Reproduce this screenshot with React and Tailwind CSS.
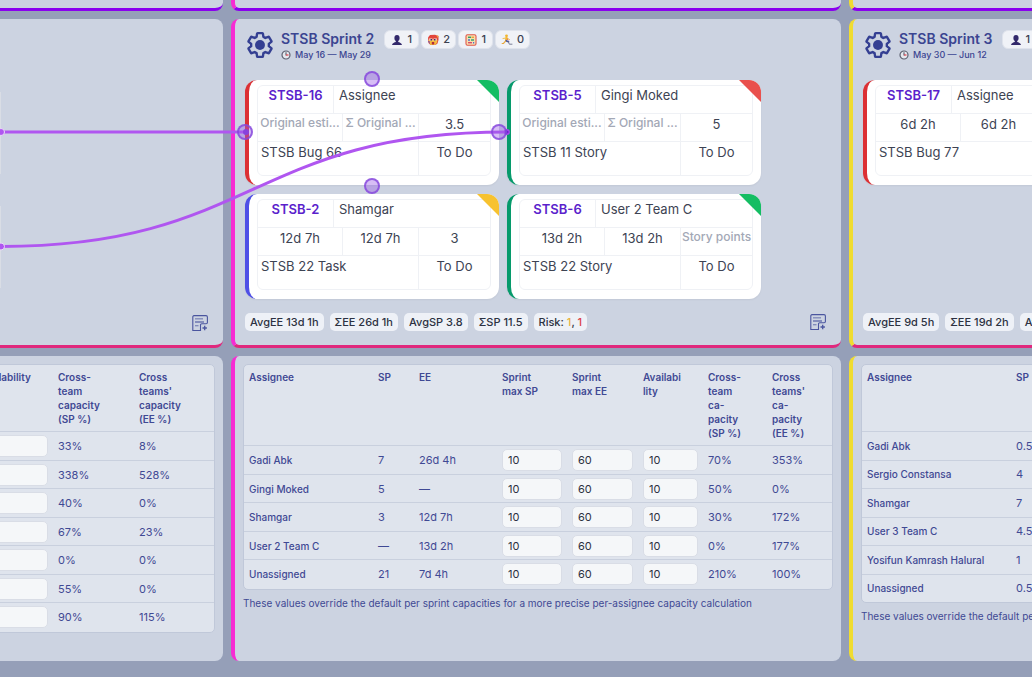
import { useState } from "react";
import clsx from "clsx";

const TYPE_BORDER = {
  bug: "border-l-[#dc3034]",
  task: "border-l-[#4f4fe6]",
  story: "border-l-[#069a6b]",
};

const PRIORITY_BG = {
  low: "bg-[#14bd63]",
  medium: "bg-[#f7c22f]",
  high: "bg-[#e9504d]",
};

const sprint2Issues = [
  { key: "STSB-16", type: "bug", assignee: "Assignee", points: "3.5", title: "STSB Bug 66", status: "To Do", priority: "low", linked: true },
  { key: "STSB-5", type: "story", assignee: "Gingi Moked", points: "5", title: "STSB 11 Story", status: "To Do", priority: "high" },
  { key: "STSB-2", type: "task", assignee: "Shamgar", estimate: "12d 7h", total: "12d 7h", points: "3", title: "STSB 22 Task", status: "To Do", priority: "medium" },
  { key: "STSB-6", type: "story", assignee: "User 2 Team C", estimate: "13d 2h", total: "13d 2h", title: "STSB 22 Story", status: "To Do", priority: "low" },
];

const sprint3Issues = [
  { key: "STSB-17", type: "bug", assignee: "Assignee", estimate: "6d 2h", total: "6d 2h", points: "1", title: "STSB Bug 77", status: "To Do", priority: "low" },
];

const sprint2Capacity = [
  { name: "Gadi Abk", sp: "7", ee: "26d 4h", crossSp: "70%", crossEe: "353%" },
  { name: "Gingi Moked", sp: "5", ee: "—", crossSp: "50%", crossEe: "0%" },
  { name: "Shamgar", sp: "3", ee: "12d 7h", crossSp: "30%", crossEe: "172%" },
  { name: "User 2 Team C", sp: "—", ee: "13d 2h", crossSp: "0%", crossEe: "177%" },
  { name: "Unassigned", sp: "21", ee: "7d 4h", crossSp: "210%", crossEe: "100%" },
];

const sprint3Capacity = [
  ["Gadi Abk", "0.5"],
  ["Sergio Constansa", "4"],
  ["Shamgar", "7"],
  ["User 3 Team C", "4.5"],
  ["Yosifun Kamrash Halural", "1"],
  ["Unassigned", "0.5"],
];

const sprint1Capacity = [
  ["33%", "8%"],
  ["338%", "528%"],
  ["40%", "0%"],
  ["67%", "23%"],
  ["0%", "0%"],
  ["55%", "0%"],
  ["90%", "115%"],
];

const GearIcon = () => (
  <svg className="size-[26px]" viewBox="1 1 22 22" fill="none">
    <path
      stroke="currentColor"
      strokeWidth="2"
      strokeLinejoin="round"
      d="M19.43 12.98c.04-.32.07-.64.07-.98 0-.34-.03-.66-.07-.98l2.11-1.65c.19-.15.24-.42.12-.64l-2-3.46a.5.5 0 0 0-.61-.22l-2.49 1c-.52-.4-1.08-.73-1.69-.98l-.38-2.65A.488.488 0 0 0 14 2h-4c-.25 0-.46.18-.49.42l-.38 2.65c-.61.25-1.17.59-1.69.98l-2.49-1a.566.566 0 0 0-.18-.03c-.17 0-.34.09-.43.25l-2 3.46c-.13.22-.07.49.12.64l2.11 1.65c-.04.32-.07.65-.07.98 0 .33.03.66.07.98l-2.11 1.65c-.19.15-.24.42-.12.64l2 3.46a.5.5 0 0 0 .61.22l2.49-1c.52.4 1.08.73 1.69.98l.38 2.65c.03.24.24.42.49.42h4c.25 0 .46-.18.49-.42l.38-2.65c.61-.25 1.17-.59 1.69-.98l2.49 1c.06.02.12.03.18.03.17 0 .34-.09.43-.25l2-3.46c.12-.22.07-.49-.12-.64l-2.11-1.65z"
    />
    <circle cx="12" cy="12" r="4.200" fill="currentColor" />
  </svg>
);

const ClockIcon = () => (
  <svg className="size-[10px]" viewBox="0 0 20 20" fill="none">
    <circle cx="10" cy="10" r="8" fill="#e6e8ee" stroke="#5c6070" strokeWidth="2.4" />
    <path d="M10 4.500V11" stroke="#474b5c" strokeWidth="2" />
    <path d="M10 10h5" stroke="#e0414a" strokeWidth="2.400" />
  </svg>
);

const PersonIcon = () => (
  <svg className="size-3" viewBox="0 0 12 12">
    <path d="M6 1C4.200 1 3.400 2.300 3.400 4c0 1.500.6 2.500 1.400 3v1C3.500 8.400 1.300 9 1 11h10c-.3-2-2.500-2.600-3.800-3V7c.8-.5 1.400-1.500 1.400-3C8.600 2.300 7.800 1 6 1z" fill="#33296b" />
  </svg>
);

const HeroIcon = () => (
  <svg className="size-3" viewBox="0 0 12 12">
    <path d="M1 3.500L3 1l5-.2L11.500 2v4l-1 3.500-2 1.500h-5L1.500 9z" fill="#e2453c" />
    <path d="M1.500 6h9l-.5 2.500L8.500 11h-5L2 8.500z" fill="#f5b940" />
    <path d="M2 4.500h3.500v2H2.500zM6.500 4.500H10l-.5 2h-3z" fill="#f7e6d0" />
    <path d="M3.500 5h1.500v1.500H3.500zM7 5h1.500v1.500H7z" fill="#3c2f63" />
    <path d="M4.800 8h2.400v2.500H4.800z" fill="#b02a3e" />
    <path d="M9.500 1l2 1-1 2z" fill="#f3a93a" />
    <path d="M1 7l1 2 1 1-.5-3z" fill="#7a4aa0" />
  </svg>
);

const AbacusIcon = () => (
  <svg className="size-3" viewBox="0 0 12 12">
    <rect x="1" y="0.800" width="10" height="10.400" rx="1.500" fill="#f6dfae" stroke="#e0574b" strokeWidth="1.100" />
    <path d="M3 3.300h3" stroke="#2e9e6a" strokeWidth="1.400" />
    <path d="M6.500 3.300h2.500" stroke="#e8a43a" strokeWidth="1.400" />
    <path d="M3 6h2" stroke="#4d6fd1" strokeWidth="1.400" />
    <path d="M6 6h3" stroke="#2e9e6a" strokeWidth="1.400" />
    <path d="M3 8.700h4" stroke="#d94b6d" strokeWidth="1.400" />
    <path d="M8 8.700h1.200" stroke="#4d6fd1" strokeWidth="1.400" />
  </svg>
);

const RunnerIcon = () => (
  <svg className="size-3" viewBox="0 0 12 12" fill="none" strokeLinecap="round">
    <circle cx="5.500" cy="1.800" r="1.400" fill="#f2b52d" />
    <path d="M5.500 3.500L5 6.500" stroke="#efb52f" strokeWidth="2" />
    <path d="M5.200 4L2 4.500M5.800 4l2.700 1.500" stroke="#f3c04a" strokeWidth="1" />
    <path d="M5 6.800l2.500 1" stroke="#46539c" strokeWidth="1.600" />
    <path d="M4.500 7.200L2.500 9.500H1.200" stroke="#e9a83b" strokeWidth="1.200" />
    <path d="M7.500 8l.8 2.200H11" stroke="#7a7f97" strokeWidth="1" />
    <path d="M6.300 5l.8.8" stroke="#d94848" strokeWidth="1" />
  </svg>
);

const NotesIcon = () => (
  <svg className="size-4" viewBox="0 0 16 16" fill="none" stroke="currentColor">
    <path d="M8.500 15.500H.8V2A1.300 1.300 0 0 1 2 .6h12A1.400 1.400 0 0 1 15.400 2v5.500a1.300 1.300 0 0 1-1.400 1.300H9.800a1.300 1.300 0 0 0-1.300 1.300z" strokeWidth="1.100" />
    <path d="M3 3.800h8" strokeWidth="1.300" opacity="0.600" />
    <path d="M3 7h9" strokeWidth="1.100" />
    <path d="M3 10.700h3.500" strokeWidth="1.300" opacity="0.600" />
    <path d="M12.700 10.800v4.400M10.500 13h4.400" strokeWidth="1.300" />
  </svg>
);

const Panel = ({ className, children }) => (
  <section className={clsx("flex min-w-0 flex-col bg-[#ccd3e1]", className)}>{children}</section>
);

const Badge = ({ icon, label, children }) => (
  <span
    title={label}
    className="flex h-[19px] w-[35px] items-center justify-center gap-1 rounded-md border border-[#dfe3ec] bg-[#f0f2f7] text-[11px] font-medium text-[#3b3f50]"
  >
    {icon}
    {children}
  </span>
);

const Chip = ({ children }) => (
  <span className="rounded-[5px] bg-[#eef1f7] px-[5px] text-[11px] leading-[18px] font-medium whitespace-nowrap text-[#2c3142]">
    {children}
  </span>
);

const SprintHeader = ({ name, dates, children }) => (
  <header className="flex items-start">
    <button type="button" aria-label={`${name} settings`} className="mt-[2px] ml-[2px] text-[#343f92]">
      <GearIcon />
    </button>
    <div className="ml-2 flex flex-col text-[#3b4591]">
      <h2 className="text-sm leading-[18px] font-semibold whitespace-nowrap">{name}</h2>
      <p className="flex items-center gap-1 text-[9px] leading-[14px] font-medium whitespace-nowrap">
        <ClockIcon />
        {dates}
      </p>
    </div>
    <div className="ml-[10px] flex gap-[2px]">{children}</div>
  </header>
);

const Handle = ({ className }) => (
  <span className={clsx("absolute z-10 size-4 rounded-full border-2 border-[#8446dc]/80 bg-[#9b5de5]/40", className)} />
);

const CardValue = ({ value, placeholder }) =>
  value ? (
    <div className="text-center">{value}</div>
  ) : (
    <div className="text-center text-xs leading-[17px] font-medium whitespace-nowrap text-[#a3a8b6]">{placeholder}</div>
  );

const IssueCard = ({ issue }) => (
  <article className="relative w-[254px]">
    <div
      className={clsx(
        "relative overflow-hidden rounded-xl border-l-4 bg-white pt-[5px] pr-2 pb-[9px] pl-2 shadow-xs",
        TYPE_BORDER[issue.type]
      )}
    >
      <div className="divide-y divide-[#eff1f5] rounded-md border border-[#eff1f5] text-[13px] leading-5 text-[#3d4353]">
        <div className="grid h-7 grid-cols-[76px_1fr] divide-x divide-[#eff1f5] leading-[18px]">
          <a href={`#${issue.key}`} className="text-center font-semibold text-[#5b1fcc]">
            {issue.key}
          </a>
          <div className="truncate pl-[5px]">{issue.assignee}</div>
        </div>
        <div className="grid h-7 grid-cols-[85px_76px_1fr] divide-x divide-[#eff1f5]">
          <CardValue value={issue.estimate} placeholder="Original esti..." />
          <CardValue value={issue.total} placeholder="Σ Original ..." />
          <CardValue value={issue.points} placeholder="Story points" />
        </div>
        <div className="grid h-[33px] grid-cols-[161px_1fr] divide-x divide-[#eff1f5]">
          <div className="truncate pl-[3px]">{issue.title}</div>
          <div className="text-center">{issue.status}</div>
        </div>
      </div>
      <span
        className={clsx(
          "absolute top-0 right-0 size-[22px] [clip-path:polygon(0_0,100%_0,100%_100%)]",
          PRIORITY_BG[issue.priority]
        )}
      />
    </div>
    {issue.linked && (
      <>
        <Handle className="top-[44px] -left-2" />
        <Handle className="top-[44px] -right-2" />
        <Handle className="-top-[9px] left-[119px]" />
        <Handle className="-bottom-[9px] left-[119px]" />
      </>
    )}
  </article>
);

const SprintFooter = ({ children }) => (
  <footer className="mt-auto flex items-center gap-[6px]">
    {children}
    <button type="button" aria-label="Add note" className="mr-[5px] ml-auto text-[#4a559f]">
      <NotesIcon />
    </button>
  </footer>
);

const Th = ({ children }) => (
  <th scope="col" className="py-[5px] pr-1 pl-[6px] align-top font-semibold first:pl-[5px]">
    {children}
  </th>
);

const Td = ({ children }) => <td className="pr-1 pl-[6px]">{children}</td>;

const CapacityInput = ({ initial, label }) => {
  const [value, setValue] = useState(initial);
  return (
    <input
      type="text"
      aria-label={label}
      value={value}
      onChange={(e) => setValue(e.target.value)}
      className="block h-[22px] w-full rounded-[5px] border border-[#d9dde6] bg-[#f5f7f9] px-[5px] text-[11px] text-[#2c3142]"
    />
  );
};

const CapacityTable = ({ cols, head, children }) => (
  <div className="rounded-[5px] border border-[#c0c8d9] bg-[#dfe4ed]">
    <table className="w-full table-fixed border-collapse text-left text-[11px] leading-[14px] text-[#3f4994] [&_th]:text-[10px] [&_th]:leading-[14px]">
      <colgroup>{cols}</colgroup>
      <thead>{head}</thead>
      <tbody className="[&_tr]:border-t [&_tr]:border-[#c9d0de] [&_tr:nth-child(even)]:h-[28px] [&_tr:nth-child(odd)]:h-[29px]">
        {children}
      </tbody>
    </table>
  </div>
);

const CapacityNote = () => (
  <p className="mt-1 text-[10px] leading-[18px] whitespace-nowrap text-[#3f4994]">
    These values override the default per sprint capacities for a more precise per-assignee capacity calculation
  </p>
);

const Links = () => (
  <svg className="pointer-events-none absolute top-0 left-0 h-[300px] w-[520px]" viewBox="0 0 520 300" fill="none">
    <path d="M1 132H245" stroke="#b056f0" strokeWidth="3" />
    <path d="M1 246.500C253 246.500 253 132 507 132" stroke="#b056f0" strokeWidth="3" />
    <circle cx="1" cy="132" r="3.500" fill="#b056f0" stroke="#eadcf8" />
    <circle cx="1" cy="246.500" r="3.500" fill="#b056f0" stroke="#eadcf8" />
    <circle cx="246" cy="132" r="3" fill="#7c2fd6" />
    <circle cx="507" cy="132" r="3" fill="#a24be8" />
    <path d="M505 129l4 3-4 3z" fill="#6f1fd0" />
  </svg>
);

const App = () => (
  <main className="relative min-h-screen overflow-hidden bg-[#959fb8] font-[Inter,sans-serif]">
    <div className="grid grid-cols-[223px_minmax(0,1fr)_183px] gap-2">
      <Panel className="h-[11px] rounded-br-lg border-b-3 border-[#8a00ef]" />
      <Panel className="h-[11px] rounded-b-lg border-b-3 border-l-4 border-b-[#8a00ef] border-l-[#f72bd3]" />
      <Panel className="h-[11px] w-[610px] rounded-b-lg border-b-3 border-l-4 border-b-[#8a00ef] border-l-[#f0dc30]" />

      <Panel className="rounded-r-lg border-b-3 border-[#e0287d] pr-[10px] pb-[14px]">
        <div className="mt-[73px] flex flex-col gap-8">
          <div className="h-[82px] w-px bg-[#d9dde5]" />
          <div className="h-[82px] w-px bg-[#d9dde5]" />
        </div>
        <SprintFooter />
      </Panel>

      <Panel className="min-h-[329px] rounded-lg border-b-3 border-l-4 border-b-[#e0287d] border-l-[#f72bd3] px-[10px] pt-[11px] pb-[14px]">
        <SprintHeader name="STSB Sprint 2" dates="May 16 — May 29">
          <Badge icon={<PersonIcon />} label="Assignees">1</Badge>
          <Badge icon={<HeroIcon />} label="Epics">2</Badge>
          <Badge icon={<AbacusIcon />} label="Estimates">1</Badge>
          <Badge icon={<RunnerIcon />} label="In progress">0</Badge>
        </SprintHeader>
        <div className="mt-[18px] flex flex-wrap gap-x-2 gap-y-[9px]">
          {sprint2Issues.map((issue) => (
            <IssueCard key={issue.key} issue={issue} />
          ))}
        </div>
        <SprintFooter>
          <Chip>AvgEE 13d 1h</Chip>
          <Chip>ΣEE 26d 1h</Chip>
          <Chip>AvgSP 3.8</Chip>
          <Chip>ΣSP 11.5</Chip>
          <Chip>
            Risk: <span className="text-[#e9b23c]">1</span>, <span className="text-[#dc4048]">1</span>
          </Chip>
        </SprintFooter>
      </Panel>

      <Panel className="w-[610px] rounded-lg border-b-3 border-l-4 border-b-[#e0287d] border-l-[#f0dc30] px-[10px] pt-[11px] pb-[14px]">
        <SprintHeader name="STSB Sprint 3" dates="May 30 — Jun 12">
          <Badge icon={<PersonIcon />} label="Assignees">1</Badge>
        </SprintHeader>
        <div className="mt-[18px] flex flex-wrap gap-2">
          {sprint3Issues.map((issue) => (
            <IssueCard key={issue.key} issue={issue} />
          ))}
        </div>
        <SprintFooter>
          <Chip>AvgEE 9d 5h</Chip>
          <Chip>ΣEE 19d 2h</Chip>
          <Chip>AvgSP 3</Chip>
        </SprintFooter>
      </Panel>

      {/* Capacity per assignee */}
      <Panel className="items-end overflow-hidden rounded-r-lg py-2 pr-2">
        <div className="w-[243px]">
          <CapacityTable
            cols={
              <>
                <col />
                <col className="w-[81px]" />
                <col className="w-[81px]" />
              </>
            }
            head={
              <tr>
                <Th>Availability</Th>
                <Th>Cross-<br />team<br />capacity<br />(SP %)</Th>
                <Th>Cross<br />teams'<br />capacity<br />(EE %)</Th>
              </tr>
            }
          >
            {sprint1Capacity.map(([sp, ee], i) => (
              <tr key={i}>
                <Td><CapacityInput initial="" label={`Availability ${i + 1}`} /></Td>
                <Td>{sp}</Td>
                <Td>{ee}</Td>
              </tr>
            ))}
          </CapacityTable>
        </div>
      </Panel>

      <Panel className="min-h-[305px] rounded-lg border-l-4 border-[#f72bd3] p-2">
        <CapacityTable
          cols={
            <>
              <col />
              <col className="w-[41px]" />
              <col className="w-[83px]" />
              <col className="w-[70px]" />
              <col className="w-[71px]" />
              <col className="w-[65px]" />
              <col className="w-[64px]" />
              <col className="w-[66px]" />
            </>
          }
          head={
            <tr>
              <Th>Assignee</Th>
              <Th>SP</Th>
              <Th>EE</Th>
              <Th>Sprint<br />max SP</Th>
              <Th>Sprint<br />max EE</Th>
              <Th>Availabi<br />lity</Th>
              <Th>Cross-<br />team<br />ca-<br />pacity<br />(SP %)</Th>
              <Th>Cross<br />teams'<br />ca-<br />pacity<br />(EE %)</Th>
            </tr>
          }
        >
          {sprint2Capacity.map((row) => (
            <tr key={row.name}>
              <th scope="row" className="px-[5px] font-medium">{row.name}</th>
              <Td>{row.sp}</Td>
              <Td>{row.ee}</Td>
              <Td><CapacityInput initial="10" label={`${row.name} sprint max SP`} /></Td>
              <Td><CapacityInput initial="60" label={`${row.name} sprint max EE`} /></Td>
              <Td><CapacityInput initial="10" label={`${row.name} availability`} /></Td>
              <Td>{row.crossSp}</Td>
              <Td>{row.crossEe}</Td>
            </tr>
          ))}
        </CapacityTable>
        <CapacityNote />
      </Panel>

      <Panel className="w-[610px] rounded-lg border-l-4 border-[#f0dc30] p-2">
        <CapacityTable
          cols={
            <>
              <col className="w-[148px]" />
              <col />
            </>
          }
          head={
            <tr className="h-[66px]">
              <Th>Assignee</Th>
              <Th>SP</Th>
            </tr>
          }
        >
          {sprint3Capacity.map(([name, sp]) => (
            <tr key={name}>
              <th scope="row" className="px-[5px] font-medium">{name}</th>
              <Td>{sp}</Td>
            </tr>
          ))}
        </CapacityTable>
        <CapacityNote />
      </Panel>
    </div>
    <Links />
  </main>
);

export default App;
